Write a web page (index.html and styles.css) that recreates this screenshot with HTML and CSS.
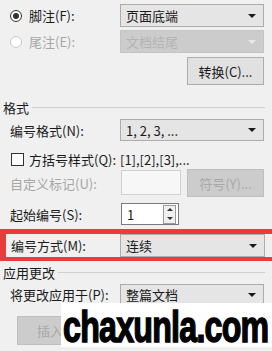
FILE: index.html
```html
<!DOCTYPE html>
<html lang="zh-CN">
<head>
  <meta charset="UTF-8" />
  <title>脚注和尾注</title>
  <link rel="stylesheet" href="styles.css">
</head>
<body>
  <div class="dialog">
    <!-- 位置 -->
    <div class="row first">
      <label class="opt"><span class="radio on"></span>脚注(F):</label>
      <div class="select">页面底端<span class="arrow"></span></div>
    </div>
    <div class="row gap3">
      <label class="opt off"><span class="radio"></span>尾注(E):</label>
      <div class="select disabled">文档结尾<span class="arrow"></span></div>
    </div>
    <div class="row btn-row">
      <span></span>
      <button class="btn">转换(C)...</button>
    </div>

    <!-- 格式 -->
    <div class="group">格式</div>
    <div class="row fmt">
      <label class="lbl">编号格式(N):</label>
      <div class="select">1, 2, 3, ...<span class="arrow"></span></div>
    </div>
    <div class="row check-row">
      <label class="lbl check"><span class="box"></span>方括号样式(Q):</label>
      <span class="value">[1],[2],[3],...</span>
    </div>
    <div class="row custom">
      <label class="lbl off">自定义标记(U):</label>
      <div class="pair">
        <span class="input"></span>
        <button class="btn" disabled>符号(Y)...</button>
      </div>
    </div>
    <div class="row start">
      <label class="lbl">起始编号(S):</label>
      <div class="spin">1<span class="spin-btns"><i class="up"></i><i class="down"></i></span></div>
    </div>
    <div class="row mark">
      <label class="lbl">编号方式(M):</label>
      <div class="select">连续<span class="arrow"></span></div>
    </div>

    <!-- 应用更改 -->
    <div class="group apply">应用更改</div>
    <div class="row scope">
      <label class="lbl">将更改应用于(P):</label>
      <div class="select">整篇文档<span class="arrow"></span></div>
    </div>
    <div class="actions">
      <button class="btn first-btn" disabled>插入</button>
      <button class="btn"></button>
      <button class="btn"></button>
    </div>

    <div class="stamp"><span>chaxunla.com</span></div>
  </div>
</body>
</html>
```

FILE: styles.css
```css
:root {
  --bg: #f0f0f0;
  --ctl: #e5e5e5;
  --border: #adadad;
  --text: #1a1a1a;
  --off: #a6a6a6;
}

body {
  margin: 0;
  background: var(--bg);
  font-family: "Noto Sans CJK SC", "Liberation Sans", sans-serif;
  font-size: 13px;
  color: var(--text);
}

.dialog {
  width: 272px;
  height: 351px;
  position: relative;
  overflow: hidden;
}

.row {
  display: grid;
  grid-template-columns: 120px 144px;
  align-items: center;
  height: 23px;
}

.first  { margin-top: 4px; }
.gap3   { margin-top: 3px; }
.btn-row { margin-top: 4px; height: 28px; }
.btn-row .btn { justify-self: end; width: 77px; height: 28px; }

.opt {
  display: flex;
  align-items: center;
  gap: 7px;
  padding-left: 10px;
}

.lbl {
  padding-left: 10px;
  white-space: nowrap;
}

.off { color: var(--off); }

.radio {
  width: 10px;
  height: 10px;
  border: 1px solid #333;
  border-radius: 50%;
  background: #fff;
  position: relative;
}

.radio.on::after {
  content: "";
  position: absolute;
  left: 2px;
  top: 2px;
  width: 6px;
  height: 6px;
  border-radius: 50%;
  background: #333;
}

.off .radio { border-color: #c8c8c8; }

.select {
  height: 100%;
  box-sizing: border-box;
  background: var(--ctl);
  border: 1px solid var(--border);
  display: flex;
  align-items: center;
  padding: 0 0 0 5px;
  position: relative;
}

.select.disabled {
  background: #cccccc;
  border-color: #c4c4c4;
  color: #b4b4b4;
}

.arrow {
  position: absolute;
  right: 7px;
  top: 50%;
  margin-top: -2px;
  border-left: 4px solid transparent;
  border-right: 4px solid transparent;
  border-top: 4px solid #1a1a1a;
}

.disabled .arrow { border-top-color: #e8e8e8; }

.btn {
  font: inherit;
  color: var(--text);
  background: #e1e1e1;
  border: 1px solid var(--border);
  padding: 0;
}

.btn:disabled {
  background: #cccccc;
  border-color: #bfbfbf;
  color: #a8a8a8;
}

.group {
  display: flex;
  align-items: center;
  gap: 3px;
  margin-top: 15px;
  padding-left: 3px;
  width: 262px;
  height: 14px;
}

.group::after {
  content: "";
  flex: 1;
  border-top: 1px solid #d0d0d0;
}

.fmt { margin-top: 5px; height: 22px; }

.check-row { margin-top: 9px; height: 18px; }

.check {
  display: flex;
  align-items: center;
  gap: 5px;
  padding-left: 11px;
}

.box {
  width: 11px;
  height: 11px;
  border: 1px solid #333;
  background: #fff;
}

.custom { margin-top: 1px; height: 28px; }

.pair {
  display: flex;
  justify-content: space-between;
  align-items: stretch;
  height: 28px;
}

.input {
  width: 58px;
  margin: 1px 0 2px 1px;
  background: #f7f7f7;
  border: 1px solid #d0d0d0;
}

.pair .btn { width: 77px; }

.start { margin-top: 6px; height: 22px; }

.spin {
  width: 58px;
  height: 22px;
  margin-left: 1px;
  box-sizing: border-box;
  background: #fff;
  border: 1px solid #7a7a7a;
  display: flex;
  align-items: center;
  justify-content: space-between;
  padding: 0 2px 0 5px;
}

.spin-btns {
  width: 11px;
  height: 17px;
  border: 1px solid #9a9a9a;
  background: #f0f0f0;
  display: flex;
  flex-direction: column;
  align-items: center;
  justify-content: space-around;
}

.spin-btns i {
  border-left: 3px solid transparent;
  border-right: 3px solid transparent;
}

.spin-btns .up { border-bottom: 3px solid #333; }
.spin-btns .down { border-top: 3px solid #333; }

.mark {
  margin-top: 4px;
  height: 23px;
  width: 272px;
  border: 5px solid #ea3c3c;
  border-left-width: 6px;
  border-right-width: 7px;
  border-bottom-width: 4px;
  box-sizing: content-box;
  grid-template-columns: 114px 145px;
}

.mark .lbl { padding-left: 5px; }

.apply { margin-top: 4px; }

.scope { margin-top: 5px; height: 21px; }

.actions {
  display: flex;
  gap: 10px;
  margin-top: 11px;
  padding-left: 17px;
}

.actions .btn { width: 76px; height: 29px; }

.actions .first-btn {
  text-align: left;
  padding-left: 19px;
}

.stamp {
  position: absolute;
  left: 61px;
  top: 303px;
  width: 211px;
  height: 44px;
  background: #fff;
}

.stamp span {
  display: block;
  color: #000;
  font-family: "Liberation Sans", sans-serif;
  font-weight: bold;
  font-size: 44px;
  line-height: 44px;
  letter-spacing: -1px;
  margin: 2px 0 0 2px;
  white-space: nowrap;
  transform: scaleX(0.73);
  transform-origin: left top;
  -webkit-text-stroke: 1.5px #000;
}
```
